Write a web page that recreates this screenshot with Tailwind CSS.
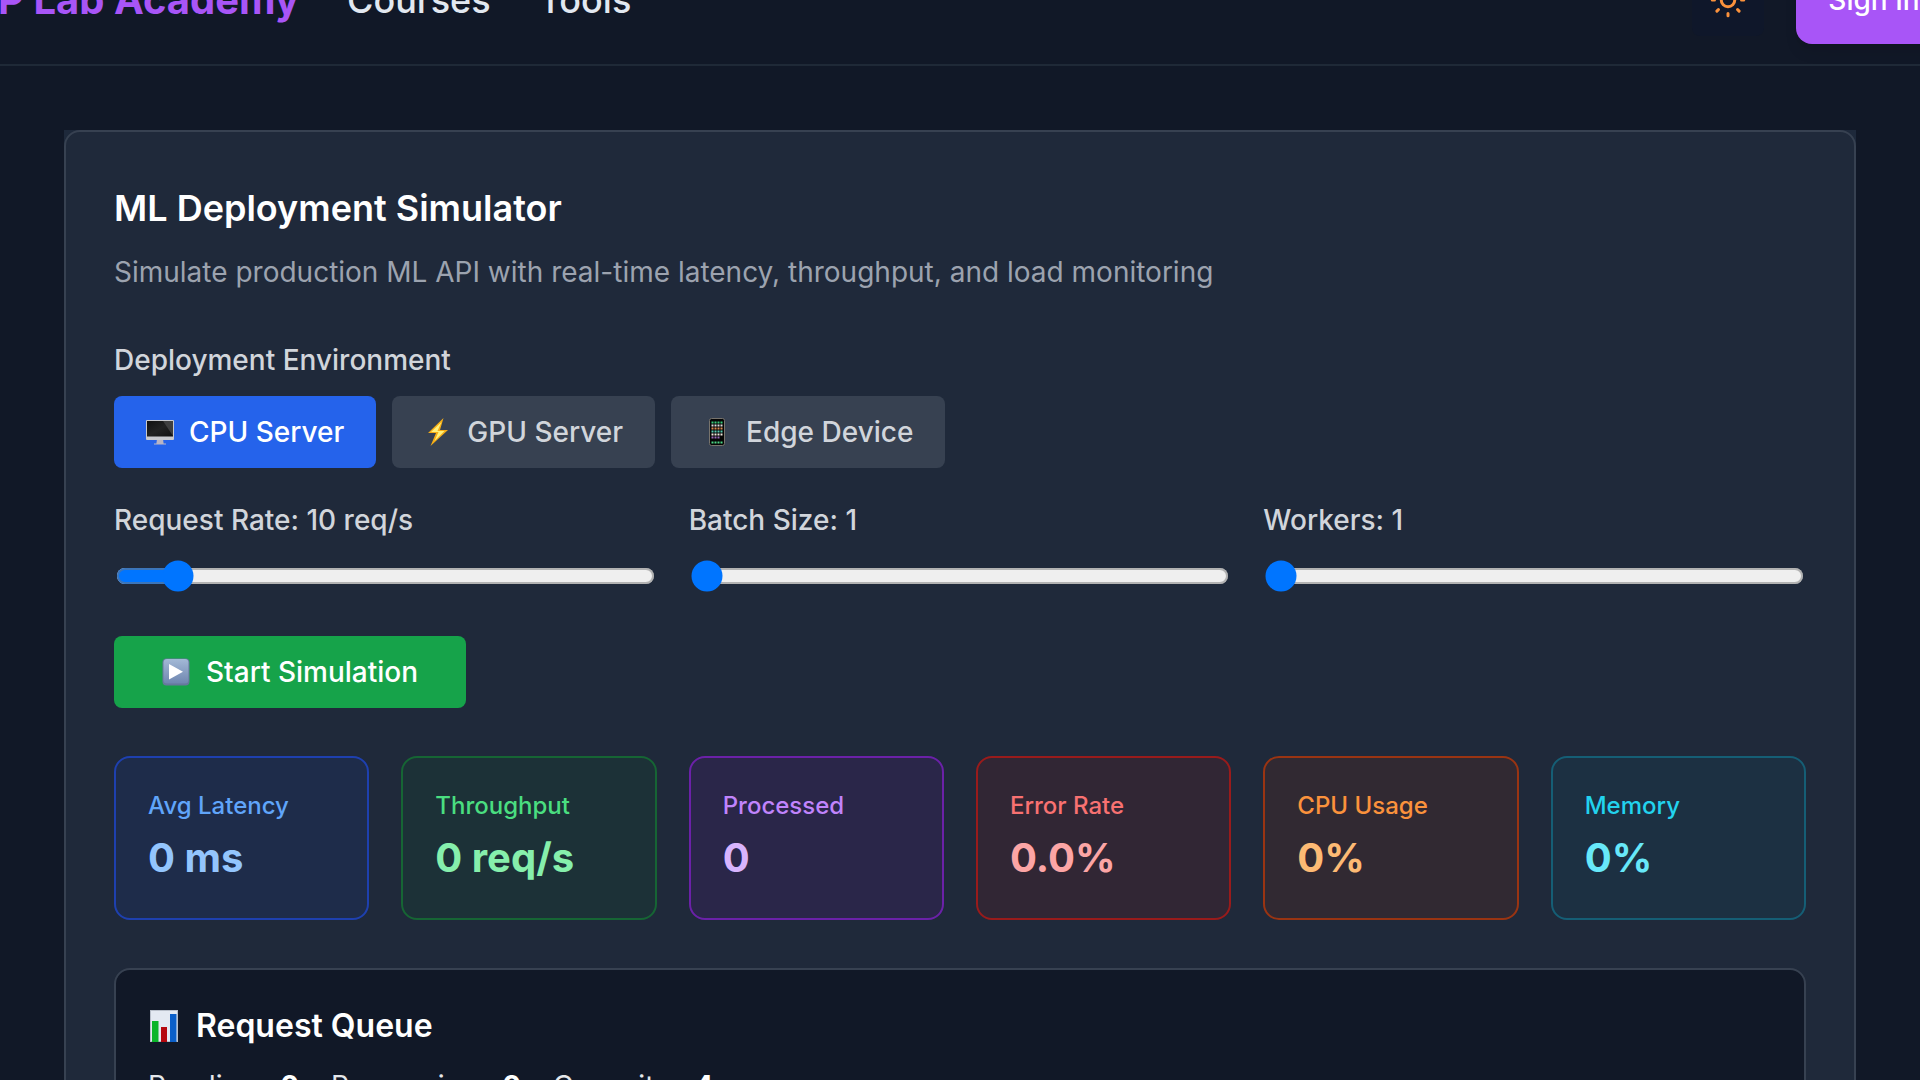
<!DOCTYPE html>
<html lang="en">
<head>
<meta charset="utf-8">
<title>ML Deployment Simulator</title>
<script src="https://cdn.jsdelivr.net/npm/@tailwindcss/browser@4"></script>
</head>
<body class="h-screen overflow-hidden bg-[#111827] font-['Inter',sans-serif] text-[28px] leading-10 text-[#d1d5db]">

<header class="-mt-16 flex h-[130px] items-center justify-between border-b-2 border-[#1f2937] bg-[#111827]">
  <div class="-ml-20 flex shrink-0 items-center gap-12 whitespace-nowrap">
    <a href="#" class="w-[379px] text-right text-[40px] font-bold text-[#a855f7]">NLP Lab Academy</a>
    <nav class="flex gap-12 text-[36px] font-medium text-[#e2e8f0]">
      <a href="#">Courses</a>
      <a href="#">Tools</a>
    </nav>
  </div>
  <div class="-mr-8 flex shrink-0 items-center gap-8">
    <button aria-label="Toggle theme" class="flex size-[72px] items-center justify-center rounded-lg bg-[#0f172a]">
      <svg class="size-9" viewBox="0 0 24 24" fill="none" stroke="#fb923c" stroke-width="2" stroke-linecap="round"><circle cx="12" cy="12" r="4.5"/><path d="M12 1.5v1.5M12 21v1.5M4.6 4.6l1 1M18.4 18.4l1 1M1.5 12H3M21 12h1.500M4.600 19.400l1-1M18.400 5.600l1-1"/></svg>
    </button>
    <button class="h-[88px] w-[156px] rounded-2xl bg-[#a855f7] text-[28px] font-medium whitespace-nowrap text-white shadow-lg">Sign In</button>
  </div>
</header>

<main class="p-16">
  <div class="bg-[#1e293b]">
    <section class="rounded-2xl border-2 border-[#374151] bg-[#1f293a] p-12">
      <h1 class="mb-4 text-[36px] leading-14 font-semibold text-white">ML Deployment Simulator</h1>
      <p class="mb-12 text-[#9ca3af]">Simulate production ML API with real-time latency, throughput, and load monitoring</p>

      <h2 class="mb-4 font-medium">Deployment Environment</h2>
      <div class="mb-8 flex gap-4 font-medium">
        <button class="flex items-center gap-[15px] rounded-lg bg-[#2563eb] px-8 py-4 text-white">
          <svg class="size-7" viewBox="0 0 28 28"><defs><linearGradient id="screen" x1="0" y1="0" x2="1" y2="1"><stop offset="0" stop-color="#111"/><stop offset=".5" stop-color="#222"/><stop offset="1" stop-color="#111"/></linearGradient></defs><path d="M11 21h6l.6 4.500h2.400V26.500H8V25.500h2.400z" fill="#b9b5c4"/><rect x="0" y="2" width="28" height="20" rx="1" fill="#c8c9ce"/><rect x="1" y="3" width="26" height="15.500" fill="url(#screen)"/><path d="M17 3h10v15z" fill="#555" opacity=".6"/></svg>
          CPU Server
        </button>
        <button class="flex items-center gap-[15px] rounded-lg bg-[#374151] px-8 py-4">
          <svg class="size-7" viewBox="0 0 28 28"><path d="M19.500 0 4 15h8L6.500 28 24 12H16z" fill="#f5ad16"/><path d="M17.500 4 7 14h7.500L10.500 23 20.500 13H13.500z" fill="#fff17a"/></svg>
          GPU Server
        </button>
        <button class="flex items-center gap-[15px] rounded-lg bg-[#374151] px-8 py-4">
          <svg class="size-7" viewBox="0 0 28 28"><rect x="6.500" y=".5" width="15" height="27" rx="2" fill="#050505" stroke="#77736c"/><g stroke-width="2" stroke-dasharray="2 1"><path d="M8.500 4.500h11" stroke="#37c978"/><path d="M8.500 7.500h11" stroke="#ddd"/><path d="M8.500 10.500h11" stroke="#d98a50"/><path d="M8.500 13.500h11" stroke="#55c9b2"/><path d="M8.500 16.500h11" stroke="#f0e8dd"/><path d="M8.500 19.500h8" stroke="#9667b8"/><path d="M8.500 24.500h11" stroke="#4bd685"/></g></svg>
          Edge Device
        </button>
      </div>

      <div class="mb-11 grid grid-cols-3 gap-8 font-medium">
        <div>
          <label for="rate">Request Rate: 10 req/s</label>
          <input id="rate" type="range" min="1" max="100" value="10" class="mx-px mt-[10px] block w-[calc(100%-2px)] [zoom:2]">
        </div>
        <div>
          <label for="batch">Batch Size: 1</label>
          <input id="batch" type="range" min="1" max="32" value="1" class="mx-px mt-[10px] block w-[calc(100%-2px)] [zoom:2]">
        </div>
        <div>
          <label for="workers">Workers: 1</label>
          <input id="workers" type="range" min="1" max="8" value="1" class="mx-px mt-[10px] block w-[calc(100%-2px)] [zoom:2]">
        </div>
      </div>

      <button class="mb-12 flex items-center gap-4 rounded-lg bg-[#16a34a] px-12 py-4 font-medium text-white">
        <svg class="size-7" viewBox="0 0 28 28"><defs><linearGradient id="key" x1="0" y1="0" x2="0" y2="1"><stop offset="0" stop-color="#a3b9d6"/><stop offset="1" stop-color="#6f86b0"/></linearGradient></defs><rect x=".5" y=".5" width="27" height="27" rx="4" fill="#66789c"/><rect x="1.500" y="1" width="25" height="24.500" rx="3.500" fill="url(#key)"/><path d="M7 6v15.500l14-7.750z" fill="#fff"/></svg>
        Start Simulation
      </button>

      <dl class="mb-12 grid grid-cols-6 gap-8 text-2xl leading-8 font-medium">
        <div class="rounded-2xl border-2 border-[#1e40af] bg-[#1e3a8a]/20 p-8">
          <dt class="text-[#60a5fa]">Avg Latency</dt>
          <dd class="mt-2 text-[40px] leading-14 font-bold text-[#93c5fd]">0 ms</dd>
        </div>
        <div class="rounded-2xl border-2 border-[#166534] bg-[#14532d]/20 p-8">
          <dt class="text-[#4ade80]">Throughput</dt>
          <dd class="mt-2 text-[40px] leading-14 font-bold text-[#86efac]">0 req/s</dd>
        </div>
        <div class="rounded-2xl border-2 border-[#6b21a8] bg-[#581c87]/20 p-8">
          <dt class="text-[#c084fc]">Processed</dt>
          <dd class="mt-2 text-[40px] leading-14 font-bold text-[#d8b4fe]">0</dd>
        </div>
        <div class="rounded-2xl border-2 border-[#991b1b] bg-[#7f1d1d]/20 p-8">
          <dt class="text-[#f87171]">Error Rate</dt>
          <dd class="mt-2 text-[40px] leading-14 font-bold text-[#fca5a5]">0.0%</dd>
        </div>
        <div class="rounded-2xl border-2 border-[#9a3412] bg-[#7c2d12]/20 p-8">
          <dt class="text-[#fb923c]">CPU Usage</dt>
          <dd class="mt-2 text-[40px] leading-14 font-bold text-[#fdba74]">0%</dd>
        </div>
        <div class="rounded-2xl border-2 border-[#155e75] bg-[#164e63]/20 p-8">
          <dt class="text-[#22d3ee]">Memory</dt>
          <dd class="mt-2 text-[40px] leading-14 font-bold text-[#67e8f9]">0%</dd>
        </div>
      </dl>

      <section class="rounded-2xl border-2 border-[#374151] bg-[#111827] p-8">
        <h2 class="mb-4 flex items-center gap-4 text-[32px] leading-12 font-semibold text-white">
          <svg class="size-8" viewBox="0 0 32 32"><rect x="2" y="0" width="28" height="32" fill="#b9bfca"/><rect x="3" y="1" width="26" height="30" fill="#e4e9f2"/><path d="M4 11h6.500v21H4z" fill="#0bb52a"/><path d="M13 17h6v15h-6z" fill="#b5070e"/><path d="M22 4h6.500v28H22z" fill="#0b5fc9"/></svg>
          Request Queue
        </h2>
        <div class="flex gap-8 text-[#e5e7eb]">
          <p>Pending: <strong class="ml-2 font-bold text-white">0</strong></p>
          <p>Processing: <strong class="ml-2 font-bold text-white">0</strong></p>
          <p>Capacity: <strong class="ml-2 font-bold text-white">4</strong></p>
        </div>
      </section>
    </section>
  </div>
</main>
</body>
</html>
